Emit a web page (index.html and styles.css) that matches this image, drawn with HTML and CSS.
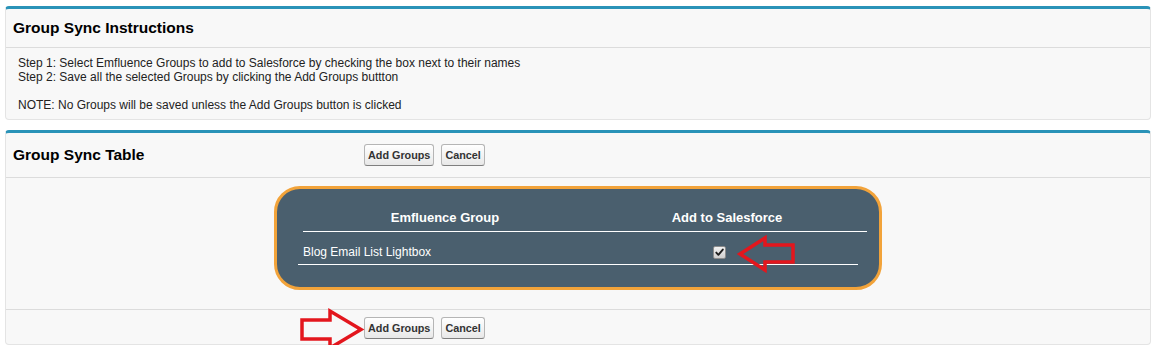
FILE: index.html
```html
<!DOCTYPE html>
<html lang="en">
<head>
<meta charset="utf-8">
<title>Group Sync</title>
<link rel="stylesheet" href="styles.css">
</head>
<body>
<div class="page">
  <section class="panel">
    <div class="panel-head">
      <h2 class="panel-title">Group Sync Instructions</h2>
    </div>
    <div class="panel-body instructions">
      <p>Step 1: Select Emfluence Groups to add to Salesforce by checking the box next to their names<br>Step 2: Save all the selected Groups by clicking the Add Groups buttton<br><br>NOTE: No Groups will be saved unless the Add Groups button is clicked</p>
    </div>
  </section>

  <section class="panel">
    <div class="panel-head split">
      <h2 class="panel-title">Group Sync Table</h2>
      <div class="btns"><button class="btn">Add Groups</button><button class="btn">Cancel</button></div>
    </div>
    <div class="panel-body table-area">
      <div class="sync-box">
        <div class="sync-head">
          <div class="hcol first">Emfluence Group</div>
          <div class="hcol">Add to Salesforce</div>
        </div>
        <div class="sync-row">
          <div class="cell name">Blog Email List Lightbox</div>
          <div class="cell check">
            <span class="checkbox"><svg viewBox="0 0 11 11" width="11" height="11"><path d="M2.3 5.6 L4.4 7.8 L8.8 2.6" fill="none" stroke="#1e1e1e" stroke-width="1.9" stroke-linecap="round" stroke-linejoin="round"/></svg></span>
          </div>
        </div>
      </div>
      <svg class="arrow arrow-left" viewBox="0 0 62 40" width="62" height="40"><path d="M4 20 L29 4 L29 11 L57 11 L57 28 L29 28 L29 36 Z" fill="none" stroke="#e3161d" stroke-width="3.5" stroke-linejoin="miter"/></svg>
    </div>
    <div class="panel-foot split">
      <div class="spacer"></div>
      <div class="btns"><button class="btn">Add Groups</button><button class="btn">Cancel</button></div>
      <svg class="arrow arrow-right" viewBox="0 0 68 46" width="68" height="46"><path d="M4 13 L32 13 L32 4 L63 22.5 L32 41 L32 32 L4 32 Z" fill="none" stroke="#e3161d" stroke-width="3.5" stroke-linejoin="miter"/></svg>
    </div>
  </section>
</div>
</body>
</html>
```

FILE: styles.css
```css
html, body {
  margin: 0;
  padding: 0;
  background: #ffffff;
}

body {
  font-family: Arial, "Liberation Sans", Helvetica, sans-serif;
  color: #1a1a1a;
  font-size: 12px;
}

.page {
  padding: 6px 3px 0 5px;
  display: flex;
  flex-direction: column;
  gap: 10px;
}

.panel {
  background: #f8f8f8;
  border: 1px solid #e4e4e4;
  border-top: 3px solid #2a93b8;
  border-radius: 4px;
}

.panel-head {
  height: 38px;
  display: flex;
  align-items: center;
  padding-left: 7px;
  border-bottom: 1px solid #dcdcdc;
}

.panel-title {
  margin: 0;
  font-size: 15.5px;
  font-weight: bold;
  color: #000;
}

.panel-head.split {
  height: 44px;
  padding-left: 0;
  display: grid;
  grid-template-columns: 358px 1fr;
  align-items: center;
}

.panel-head.split .panel-title {
  padding-left: 7px;
}

.instructions {
  padding: 8px 12px 7px 12px;
}

.instructions p {
  margin: 0;
  line-height: 14px;
  font-size: 12px;
  color: #222;
}

.btns {
  display: flex;
  gap: 7px;
}

.btn {
  font-family: Arial, "Liberation Sans", Helvetica, sans-serif;
  font-size: 10.8px;
  font-weight: bold;
  color: #333;
  height: 22px;
  padding: 0 3px;
  border: 1px solid #b5b5b5;
  border-bottom-color: #7f7f7f;
  border-radius: 3px;
  background: linear-gradient(#ffffff, #e8e8e8);
  line-height: 20px;
}

.table-area {
  position: relative;
  padding: 8px 0 19px 0;
  border-bottom: 1px solid #dcdcdc;
}

.sync-box {
  width: 602px;
  margin: 0 auto;
  background: #4a5f6e;
  border: 3px solid #f2a33a;
  border-radius: 26px;
  padding: 0 0 22px 0;
  color: #ffffff;
}

.sync-head {
  display: flex;
  margin: 0 12px 0 26px;
  padding: 20px 0 4px 0;
  border-bottom: 1px solid #ffffff;
  font-size: 13px;
  font-weight: bold;
  line-height: 18px;
}

.hcol {
  flex: 1;
  text-align: center;
}

.hcol.first {
  flex: 0 0 284px;
}

.sync-row {
  display: flex;
  align-items: center;
  margin: 0 21px;
  padding: 11px 0 3px 0;
  border-bottom: 1px solid #ffffff;
  line-height: 18px;
  font-size: 12px;
}

.cell.name {
  flex: 0 0 277px;
  padding-left: 5px;
}

.cell.check {
  flex: 1;
  display: flex;
  justify-content: center;
}

.checkbox {
  display: block;
  width: 11px;
  height: 11px;
  border: 1px solid #8c8c8c;
  border-radius: 2px;
  background: linear-gradient(#f2f2f2, #cfcfcf);
}

.checkbox svg {
  display: block;
}

.arrow {
  position: absolute;
  overflow: visible;
}

.arrow-left {
  left: 730px;
  top: 56px;
}

.panel-foot {
  position: relative;
  display: grid;
  grid-template-columns: 358px 1fr;
  padding: 7px 0 5px 0;
}

.arrow-right {
  left: 292px;
  top: -3px;
}
```
